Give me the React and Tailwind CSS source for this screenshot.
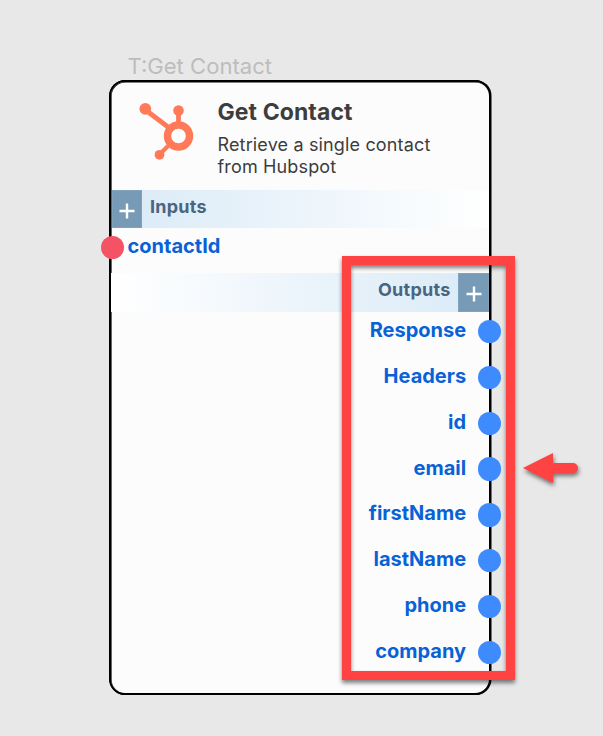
const outputs = ["Response", "Headers", "id", "email", "firstName", "lastName", "phone", "company"];

function HubspotLogo() {
  return (
    <svg className="block h-[60px] w-[60px]" viewBox="0 0 60 60" fill="none" stroke="#ff7a59">
      <path d="M9 9.5L32 27" strokeWidth="4.8" />
      <path d="M42.5 12V24" strokeWidth="4.8" />
      <path d="M34 44L24 54" strokeWidth="4.2" />
      <circle cx="42.5" cy="36" r="11" strokeWidth="7.4" />
      <g fill="#ff7a59" stroke="none">
        <circle cx="9.3" cy="8.8" r="5.9" />
        <circle cx="42.5" cy="10.5" r="5.3" />
        <circle cx="23.5" cy="54.8" r="4.9" />
      </g>
    </svg>
  );
}

function PlusBox() {
  return (
    <div className="flex w-[30.8px] shrink-0 self-stretch items-center justify-center border border-[#7fa2bd] bg-[#779bb7] pt-[3px]">
      <svg className="block h-4 w-4 shrink-0" viewBox="0 0 16 16" stroke="#fff" strokeWidth="2.4">
        <path d="M0.5 8H15.5M8 0.5V15.5" />
      </svg>
    </div>
  );
}

function OutputRow({ name }) {
  return (
    <div className="flex h-[45.8px] items-start justify-end">
      <span className="mr-[11.5px] text-[20px] leading-[24px] font-bold">{name}</span>
      <span className="relative mt-[1.8px] -mr-[12px] h-[23.4px] w-[23.4px] shrink-0 rounded-full bg-[#3d8bfd]" />
    </div>
  );
}

export default function App() {
  return (
    <div className="relative h-[736px] w-[603px] overflow-hidden bg-[#e8e8e8] pt-[52px] font-['Inter',sans-serif]">
      <div className="ml-[127.5px] h-[28px] text-[22.1px] leading-[28px] text-[#bdbdbd]">T:Get Contact</div>
      <div className="ml-[109px] h-[615px] w-[382px] rounded-[16px] border-2 border-black bg-[#fcfcfc] shadow-[0.4px_0_0_0.1px_#000,inset_0.5px_0.4px_0_0.1px_#000]">
        <div className="flex h-[108px]">
          <div className="ml-[25px] mt-[18px]">
            <HubspotLogo />
          </div>
          <div className="ml-[21.5px] mt-[15px] text-[#3d3d3d]">
            <h1 className="text-[23px] leading-[30px] font-bold tracking-[0.08px]">Get Contact</h1>
            <p className="mt-[7px] text-[18px] leading-[22px] tracking-[0.15px]">
              Retrieve a single contact
              <br />
              from Hubspot
            </p>
          </div>
        </div>
        <div className="ml-[0.5px] flex h-[38px] items-start bg-linear-to-r from-[#d9eaf7] to-white">
          <PlusBox />
          <span className="ml-[7.7px] mt-[5px] text-[18px] leading-[24px] font-bold tracking-[0.25px] text-[#4a6580]">Inputs</span>
        </div>
        <div className="flex h-[44.5px] items-start pt-[7px] text-[#0862d6]">
          <span className="relative -ml-[10px] mt-[0.8px] h-[23px] w-[23px] rounded-full bg-[#f45265]" />
          <span className="ml-[3.5px] -mt-[1px] text-[20px] leading-[24px] font-bold">contactId</span>
        </div>
        <div className="flex h-[39px] items-start justify-end bg-linear-to-r from-white to-[#d9eaf7]">
          <span className="mr-[7.7px] mt-[5px] text-[18px] leading-[24px] font-bold tracking-[0.25px] text-[#4a6580]">Outputs</span>
          <PlusBox />
        </div>
        <div className="pt-[6.8px] text-[#0862d6]">
          {outputs.map((name) => (
            <OutputRow key={name} name={name} />
          ))}
        </div>
      </div>
      <div className="absolute left-[342px] top-[256px] h-[424px] w-[173px] border-[9px] border-[#ff4242] drop-shadow-[0_3px_2px_rgba(0,0,0,0.5)]" />
      <svg className="absolute left-[518px] top-[446px] h-[48px] w-[68px] drop-shadow-[1px_3px_2px_rgba(0,0,0,0.5)]" viewBox="0 0 68 48" fill="#ff4242">
        <path d="M5 22L35 7V17H55A5 5 0 0 1 55 27H35V37Z" />
      </svg>
    </div>
  );
}
